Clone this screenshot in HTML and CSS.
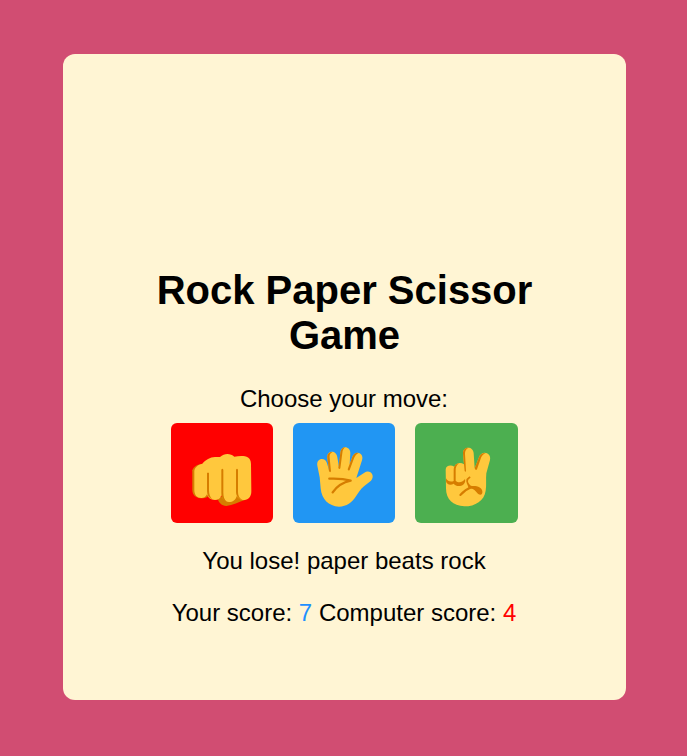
FILE: index.html
```html
<!DOCTYPE html>
<html lang="en">
<head>
<meta charset="utf-8">
<title>Rock Paper Scissor Game</title>
<link rel="stylesheet" href="styles.css">
</head>
<body>
<main class="card">
  <h1 class="title">Rock Paper Scissor Game</h1>
  <p class="prompt">Choose your move:</p>
  <div class="moves">
    <button class="move rock" aria-label="Rock">
      <svg viewBox="17 15 306 300">
        <path class="shade" d="M156 240C161 256 169 263 183 264C202 261 220 252 241 245L226 220Z"/>
        <path class="shade" d="M81 157C84 145 98 139 111 137L130 160L127 236C121 240 115 241 106 241C92 240 81 231 81 216Z"/>
        <path class="skin" d="M87 159C88 148 98 140 111 137C121 126 134 117 149 117L164 117C178 104 196 106 207 116C228 113 257 110 257 138L258 220C258 236 250 245 237 246C224 246 217 239 214 234C211 246 202 252 191 252C178 251 171 242 168 232C165 242 159 246 149 246C136 246 129 240 125 229C121 238 115 240 108 240C95 240 87 231 87 216Z"/>
        <path class="shade" d="M125 166Q128 161 131 166V217C131 229 134 237 141 244C130 240 125 231 125 219ZM168 155Q171 150 174 155V224C174 236 177 244 184 251C173 248 168 239 168 224ZM212 155Q215 150 218 155V221C218 232 221 240 230 245C218 242 212 233 212 221Z"/>
      </svg>
    </button>
    <button class="move paper" aria-label="Paper">
      <svg viewBox="17 15 306 300">
        <path class="skin" d="M90 143C86 119 115 117 119 136L125 157L120 119C118 96 148 95 150 118L155 147L159 104C161 80 190 84 189 106L187 138L194 119C201 94 232 104 224 127L207 180L231 164C248 153 265 173 251 188L230 205C219 214 214 224 206 235C194 254 178 266 155 266C124 265 103 244 100 211L97 178Z"/>
        <path class="shade" d="M120 119C119 108 126 101 135 102C127 107 126 112 127 120L131 160Q129 165 125 160ZM159 104C160 94 166 88 174 88C168 92 166 97 165 105L159 151Q156 155 153 150ZM194 119C198 108 206 103 214 105C206 109 203 114 200 121L187 156Q183 160 181 154Z"/>
        <path class="line crease" d="M126 182C149 181 169 182 190 188C166 193 148 206 136 223"/>
      </svg>
    </button>
    <button class="move scissor" aria-label="Scissor">
      <svg viewBox="17 15 306 300">
        <path class="skin" d="M109 155C109 142 125 139 135 146C139 135 154 132 164 139L161 107C160 84 192 83 193 106L196 151L208 120C217 94 247 104 242 126L231 166C229 182 232 201 229 218C225 248 198 265 165 265C131 264 110 244 110 211Z"/>
        <path class="shade" d="M110 181C115 190 124 193 133 189L133 157C133 145 139 137 149 136C141 141 139 149 139 157V188C148 197 158 193 167 183C170 193 163 203 152 204C144 205 137 202 133 197C124 203 112 200 110 190Z"/>
        <path class="shade" d="M161 107C160 95 168 89 177 89C169 94 167 99 167 108L170 160Q168 163 166 159ZM208 120C212 109 220 104 229 105C221 109 217 114 214 122L203 154Q199 159 196 151Z"/>
        <path class="line thumb" d="M181 178C171 184 170 194 182 205"/>
        <path class="line" d="M153 231C162 221 174 212 187 207"/>
        <path class="shade" d="M174 199C182 207 194 202 207 206C219 210 222 223 217 229C212 232 205 228 201 222C195 214 187 211 178 211Z"/>
      </svg>
    </button>
  </div>
  <p class="result">You lose! paper beats rock</p>
  <p class="scores">Your score: <span class="user-score">7</span> Computer score: <span class="computer-score">4</span></p>
</main>
</body>
</html>
```
FILE: styles.css
```css
* {
  box-sizing: border-box;
}

body {
  margin: 0;
  padding: 54px 61px 56px 63px;
  min-height: 756px;
  background: #d14d72;
  color: #000;
  font-family: Arial, "Liberation Sans", sans-serif;
  font-size: 24px;
}

.card {
  display: flex;
  flex-direction: column;
  align-items: center;
  height: 646px;
  padding: 214px 80px 0;
  border-radius: 12px;
  background: #fff5d4;
  text-align: center;
}

.title {
  width: 400px;
  margin: 0 0 27px;
  font-size: 40px;
  line-height: 45px;
}

.prompt,
.result,
.scores {
  margin: 0;
  padding-right: 1px;
  line-height: 28px;
}

.moves {
  display: grid;
  grid-template-columns: 102px 102px 103px;
  gap: 20px;
  margin: 10px 0 24px;
}

.move {
  height: 100px;
  padding: 0;
  border: 0;
  border-radius: 6px;
}

.move svg {
  display: block;
  width: 102px;
  height: 100px;
}

.rock {
  background: #f00;
}

.paper {
  background: #2196f3;
}

.scissor {
  background: #4caf50;
}

.skin {
  fill: #ffc83d;
}

.shade {
  fill: #d67d00;
}

.line {
  fill: none;
  stroke: #d67d00;
  stroke-width: 6;
  stroke-linecap: round;
  stroke-linejoin: round;
}

.crease {
  stroke-width: 7;
}

.thumb {
  stroke-width: 5;
}

.scores {
  margin-top: 24px;
}

.user-score {
  color: #1e90ff;
}

.computer-score {
  color: #f00;
}
```
